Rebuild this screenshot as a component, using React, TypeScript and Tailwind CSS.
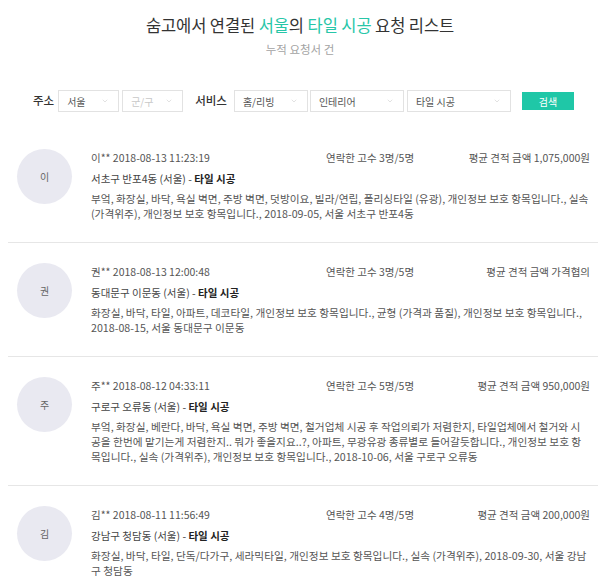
import { ChevronDown } from 'lucide-react'

const requests = [
  {
    initial: '이',
    name: '이**',
    date: '2018-08-13 11:23:19',
    contacted: '3명/5명',
    price: '1,075,000원',
    location: '서초구 반포4동 (서울)',
    desc: '부엌, 화장실, 바닥, 욕실 벽면, 주방 벽면, 덧방이요, 빌라/연립, 폴리싱타일 (유광), 개인정보 보호 항목입니다., 실속 (가격위주), 개인정보 보호 항목입니다., 2018-09-05, 서울 서초구 반포4동',
  },
  {
    initial: '권',
    name: '권**',
    date: '2018-08-13 12:00:48',
    contacted: '3명/5명',
    price: '가격협의',
    location: '동대문구 이문동 (서울)',
    desc: '화장실, 바닥, 타일, 아파트, 데코타일, 개인정보 보호 항목입니다., 균형 (가격과 품질), 개인정보 보호 항목입니다., 2018-08-15, 서울 동대문구 이문동',
  },
  {
    initial: '주',
    name: '주**',
    date: '2018-08-12 04:33:11',
    contacted: '5명/5명',
    price: '950,000원',
    location: '구로구 오류동 (서울)',
    desc: '부엌, 화장실, 베란다, 바닥, 욕실 벽면, 주방 벽면, 철거업체 시공 후 작업의뢰가 저렴한지, 타일업체에서 철거와 시공을 한번에 맡기는게 저렴한지.. 뭐가 좋을지요..?, 아파트, 무광유광 종류별로 들어갈듯합니다., 개인정보 보호 항목입니다., 실속 (가격위주), 개인정보 보호 항목입니다., 2018-10-06, 서울 구로구 오류동',
  },
  {
    initial: '김',
    name: '김**',
    date: '2018-08-11 11:56:49',
    contacted: '4명/5명',
    price: '200,000원',
    location: '강남구 청담동 (서울)',
    desc: '화장실, 바닥, 타일, 단독/다가구, 세라믹타일, 개인정보 보호 항목입니다., 실속 (가격위주), 2018-09-30, 서울 강남구 청담동',
  },
]

function Select({ label, width, muted }: { label: string; width: string; muted?: boolean }) {
  return (
    <div
      className={`flex h-[22px] items-center justify-between border border-[#e2e2e2] bg-white pl-[8px] pr-[9px] ${width}`}
    >
      <span className={`text-[10px] ${muted ? 'text-[#c8c8c8]' : 'text-[#555]'}`}>{label}</span>
      <ChevronDown size={8} strokeWidth={1.2} className="text-[#b5b5b5]" />
    </div>
  )
}

export default function App() {
  return (
    <div className="min-h-[586px] bg-white font-['Noto_Sans_CJK_KR','Noto_Sans',sans-serif] text-[#333]">
      <div className="pt-[14px] text-center">
        <h1 className="text-[16.5px] leading-[22px] tracking-[-0.1px] text-[#333]">
          숨고에서 연결된 <span className="text-[#27c6a8]">서울</span>의{' '}
          <span className="text-[#27c6a8]">타일 시공</span> 요청 리스트
        </h1>
        <p className="mt-[5px] text-[11.5px] leading-[16px] text-[#a3a3a3]">누적 요청서 건</p>
      </div>

      <div className="mt-[33px] flex items-center pl-[33px]">
        <span className="mr-[4px] text-[11.5px] font-medium text-[#333]">주소</span>
        <Select label="서울" width="w-[61px]" />
        <div className="ml-[3px]">
          <Select label="군/구" width="w-[61px]" muted />
        </div>
        <span className="ml-[12px] mr-[7px] text-[11.5px] font-medium text-[#333]">서비스</span>
        <Select label="홈/리빙" width="w-[74px]" />
        <div className="ml-[2px]">
          <Select label="인테리어" width="w-[94px]" />
        </div>
        <div className="ml-[3px]">
          <Select label="타일 시공" width="w-[104px]" />
        </div>
        <button className="ml-[11px] flex h-[18px] w-[52px] items-center justify-center bg-[#1fc7a7] text-[10px] text-white">
          검색
        </button>
      </div>

      <ul className="mt-[17px] ml-[8px] mr-[2px]">
        {requests.map((r) => (
          <li key={r.name} className="flex border-b border-[#e6e6e6] pt-[20px] pb-[21px] pl-[9px] pr-[8px]">
            <div className="flex h-[55px] w-[55px] shrink-0 items-center justify-center rounded-full bg-[#e9e9f1] text-[10px] text-[#666]">
              {r.initial}
            </div>
            <div className="ml-[19px] flex-1">
              <div className="flex text-[10.5px] leading-[18px] text-[#555]">
                <span className="w-[235px]">
                  {r.name} {r.date}
                </span>
                <span>연락한 고수 {r.contacted}</span>
                <span className="flex-1 text-right">평균 견적 금액 {r.price}</span>
              </div>
              <p className="mt-[3px] text-[10.5px] leading-[18px] text-[#444]">
                {r.location} - <span className="font-bold text-[#222]">타일 시공</span>
              </p>
              <p className="mt-[3px] text-[10.7px] leading-[15px] text-[#555]">{r.desc}</p>
            </div>
          </li>
        ))}
      </ul>
    </div>
  )
}
